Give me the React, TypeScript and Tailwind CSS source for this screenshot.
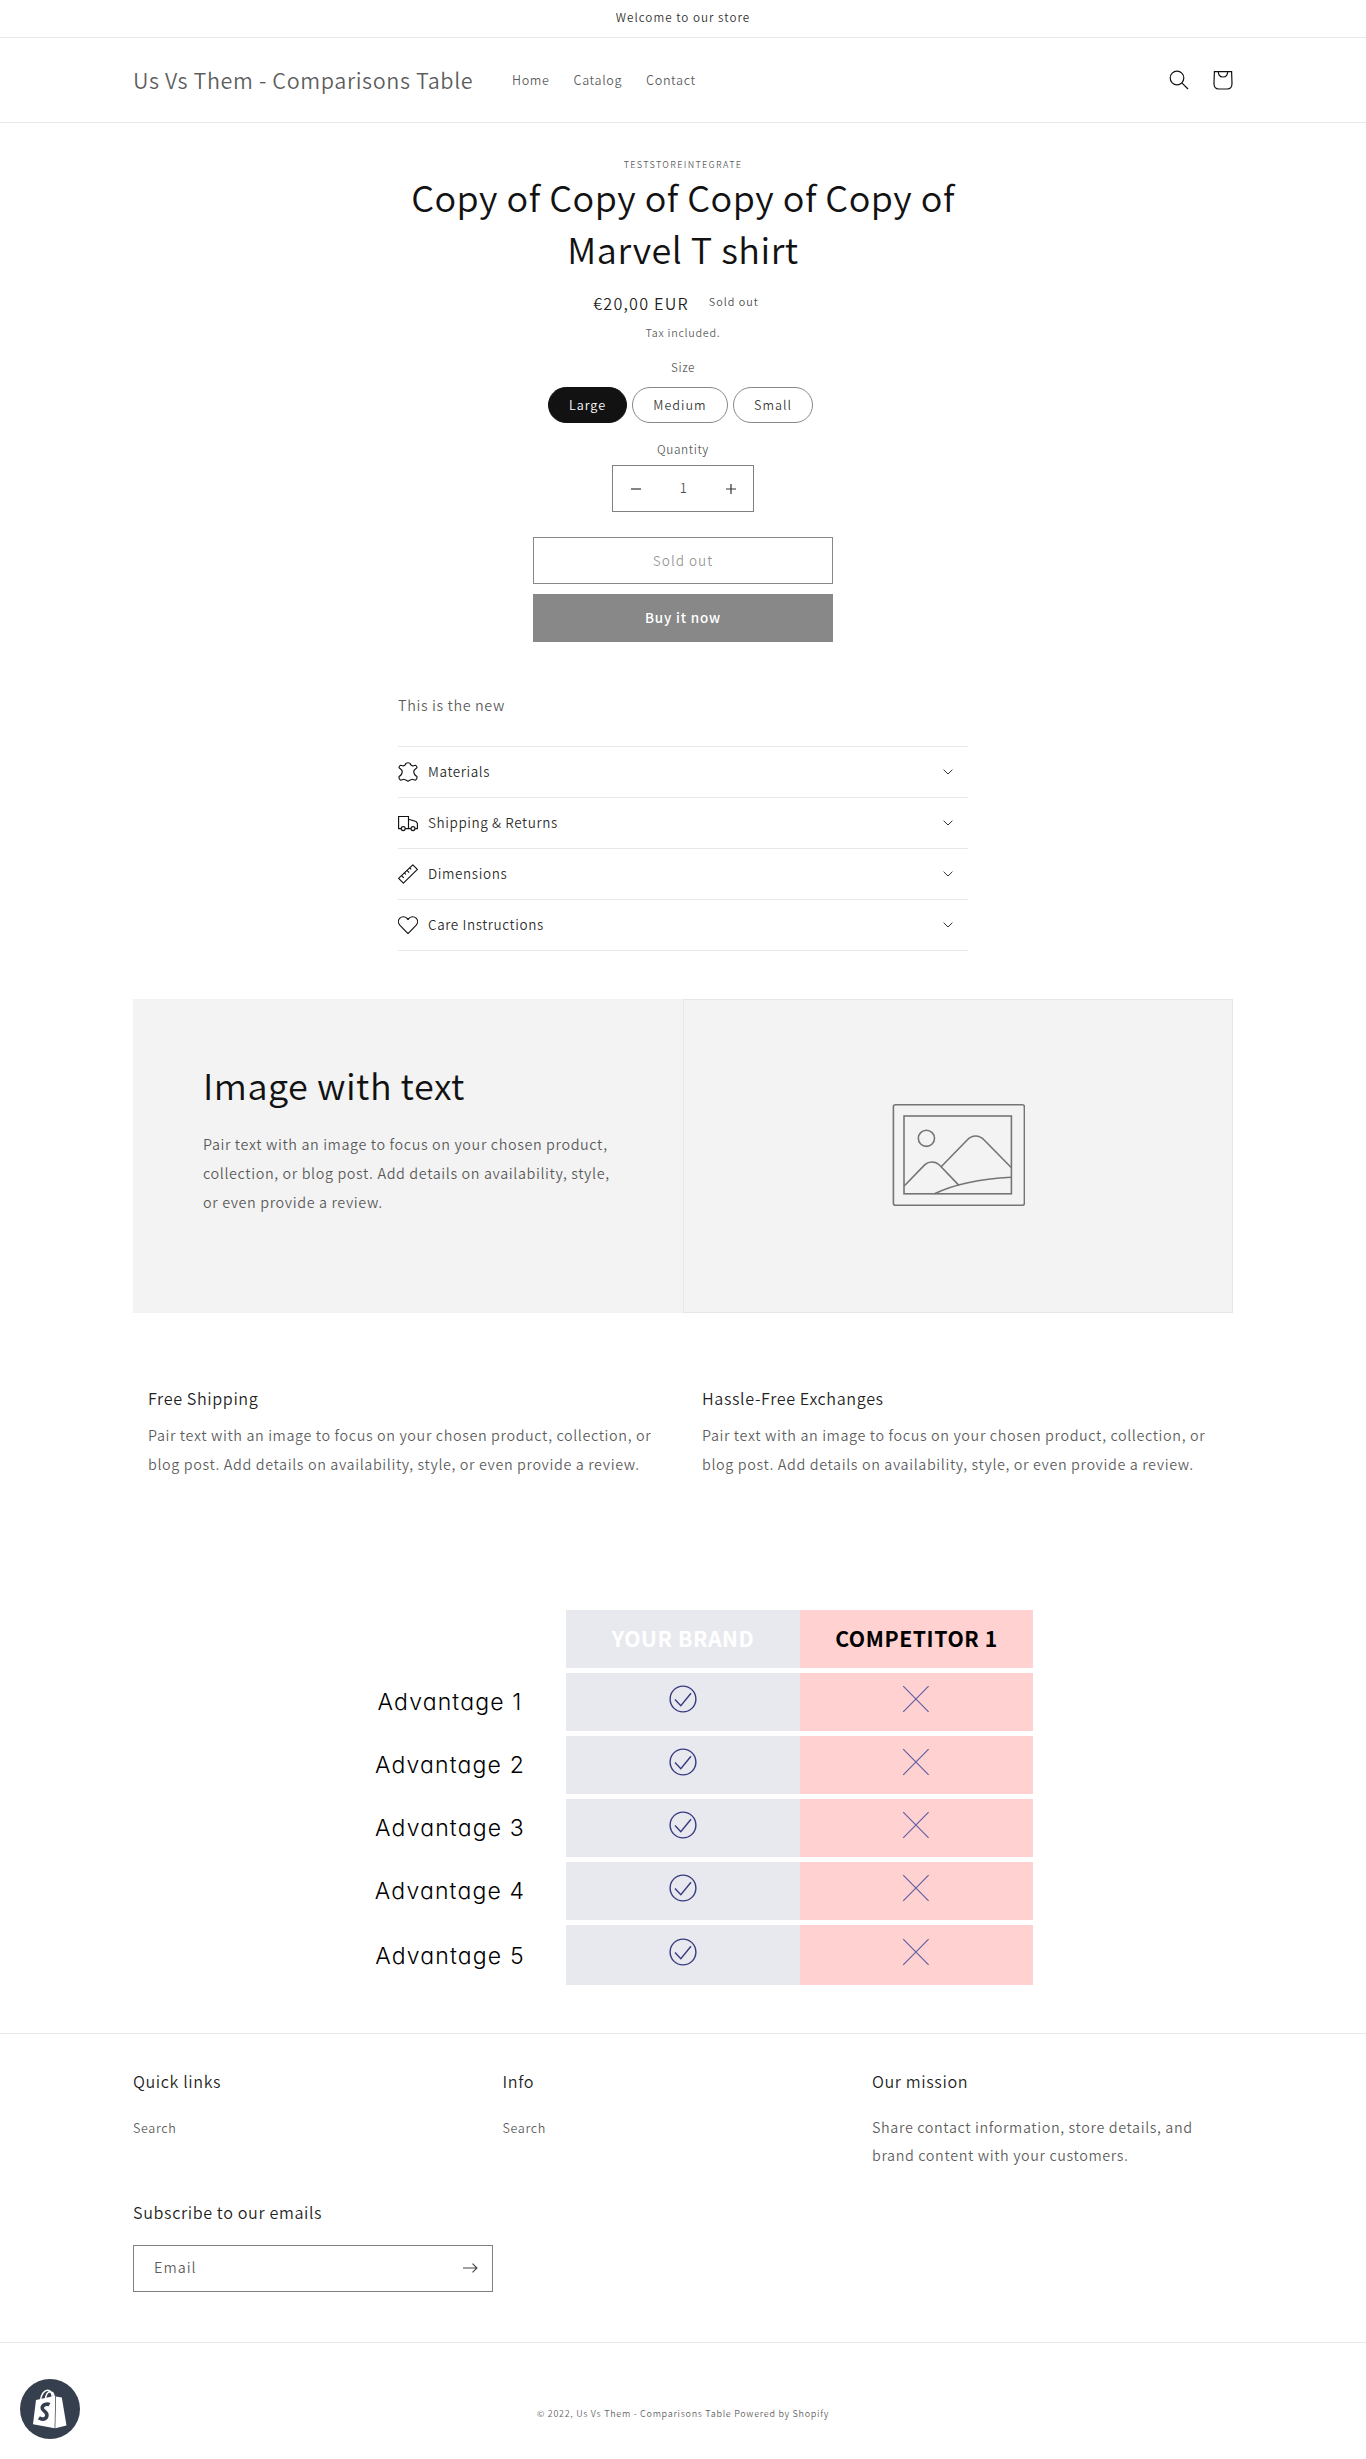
import React from "react";

const TEXT = "Pair text with an image to focus on your chosen product, collection, or blog post. Add details on availability, style, or even provide a review.";

function SearchIcon() {
  return (
    <svg className="h-[22px] w-[22px]" viewBox="0 0 22 22" fill="none" stroke="#121212" strokeWidth="1.2">
      <circle cx="9" cy="9" r="6.8" />
      <path d="M13.8 13.8L20 20" />
    </svg>
  );
}

function CartIcon() {
  return (
    <svg className="h-[22px] w-[22px]" viewBox="0 0 22 22" fill="none" stroke="#121212" strokeWidth="1.2">
      <path d="M2.4 2.6H19.6L20 14.5C20 18 18 20 15.2 20H6.8C4 20 2 18 2 14.5Z" />
      <path d="M6.3 2.6C6.3 6 8.2 8 11 8C13.8 8 15.7 6 15.7 2.6" />
    </svg>
  );
}

const rowIcon = "h-5 w-5 shrink-0";

function LeatherIcon() {
  return (
    <svg className={rowIcon} viewBox="0 0 20 20" fill="none" stroke="#121212" strokeWidth="1.15" strokeLinejoin="round">
      <path d="M7.4 2.6C7.6 1 8.8.7 10 .7S12.4 1 12.6 2.6C13.6 4.2 15.4 4 17.2 3.2C18.4 3.4 19 4.4 19 5.6C18.2 6.8 16.4 7 15.8 9C15.6 11.6 16.4 13 19 14.6C19.2 16 18.6 17.4 17.6 18C16.2 18.4 15.6 17.2 14.2 17.2C12.8 17.2 12.6 18.4 11.4 18.4C10.8 18.4 10.6 19.2 10 19.2S9.2 18.4 8.6 18.4C7.4 18.4 7.2 17.2 5.8 17.2C4.4 17.2 3.8 18.4 2.4 18C1.4 17.4.8 16 1 14.6C3.6 13 4.4 11.6 4.2 9C3.6 7 1.8 6.8 1 5.6C1 4.4 1.6 3.4 2.8 3.2C4.6 4 6.4 4.2 7.4 2.6Z" />
    </svg>
  );
}

function TruckIcon() {
  return (
    <svg className={rowIcon} viewBox="0 0 20 20" fill="none" stroke="#121212" strokeWidth="1.15">
      <path d="M3 15.6H.6V3.5H10.5V15.6H7.4M10.5 6.3L18 8.4L19.4 10.4V15.6H17.2M12.8 15.6H10.5" />
      <circle cx="5.2" cy="15.6" r="2" />
      <circle cx="15" cy="15.6" r="2" />
    </svg>
  );
}

function RulerIcon() {
  return (
    <svg className={rowIcon} viewBox="0 0 20 20" fill="none" stroke="#121212" strokeWidth="1.15" strokeLinejoin="round">
      <path d="M.6 14.4L14.8.8L19.4 5.4L5.4 19.2Z" />
      <path d="M3.6 11.6L5.8 13.8M6.4 8.9L7.9 10.4M9 6.4L11.2 8.6M11.6 3.9L13.1 5.4" />
    </svg>
  );
}

function HeartIcon() {
  return (
    <svg className={rowIcon} viewBox="0 0 20 20" fill="none" stroke="#121212" strokeWidth="1.15" strokeLinejoin="round">
      <path d="M10 18.6L2 10.3C-.1 8-.1 5 1.9 3.1C3.9 1.2 7 1.3 8.8 3.2L10 4.5L11.2 3.2C13 1.3 16.1 1.2 18.1 3.1C20.1 5 20.1 8 18 10.3Z" />
    </svg>
  );
}

function Caret() {
  return (
    <svg className="mt-px h-[6px] w-[10px]" viewBox="0 0 10 6" fill="none" stroke="#333" strokeWidth="1">
      <path d="M.6.7L5 5L9.4.7" />
    </svg>
  );
}

function Placeholder() {
  return (
    <svg className="h-[102px] w-[133px]" viewBox="0 0 133 102" fill="none" stroke="#757575" strokeWidth="1.6">
      <rect x="1.4" y="0.8" width="131" height="100.4" rx="2" />
      <rect x="12" y="12" width="107.4" height="77.8" />
      <circle cx="34.4" cy="34.3" r="8.1" />
      <path d="M12.2 82L32.9 60.6C36.9 57 43.4 57 47.4 61L67.2 81.6M49.4 62.5L74.9 36.3C79.9 30.5 87.4 30.5 92.4 36.3L119.2 63.5M42.4 89.8C60.4 81 85.4 75 119.2 73.2" />
    </svg>
  );
}

function CheckIcon() {
  return (
    <svg className="h-7 w-7" viewBox="0 0 28 28" fill="none" stroke="#373a80" strokeWidth="1.4">
      <circle cx="14" cy="14" r="12.9" />
      <path d="M6 14.6L11.8 20.7L22 8.3" />
    </svg>
  );
}

function CrossIcon() {
  return (
    <svg className="-ml-px h-7 w-7" viewBox="0 0 28 28" fill="none" stroke="#5d5fa3" strokeWidth="1.15">
      <path d="M1.2 1.2L26.6 26.8M26.6 1.2L1.2 26.8" />
    </svg>
  );
}

function ShopifyBadge() {
  return (
    <svg className="absolute top-[2379px] left-5 h-[60px] w-[60px]" viewBox="0 0 60 60">
      <circle cx="30" cy="30" r="30" fill="#363f4d" />
      <path d="M16 21L35.3 16.7L34.6 49.2L13 45.2Z" fill="#fff" />
      <path d="M36 17.4L41.8 18.6L46.5 46.6L35.3 49.2Z" fill="#fff" />
      <path d="M20.5 21.5C21 15.5 24 11.5 27.3 11.3C30.7 11.2 32.3 14.5 32.3 19M25.5 20C26 15.5 28 13 30 12.8C32.5 12.8 34 14.8 34 18.5" fill="none" stroke="#fff" strokeWidth="1.5" />
      <path d="M29.5 25.7C27.5 24.6 22.4 25.3 22.2 28.9C22.2 32.2 27.3 32.4 26.9 36.5C26.5 40.3 22.2 41.2 18.9 38.8" fill="none" stroke="#363f4d" strokeWidth="3.6" />
    </svg>
  );
}

const accordion = [
  { icon: <LeatherIcon />, label: "Materials" },
  { icon: <TruckIcon />, label: "Shipping & Returns" },
  { icon: <RulerIcon />, label: "Dimensions" },
  { icon: <HeartIcon />, label: "Care Instructions" },
];

const pill = "flex h-9 items-center justify-center rounded-full border pl-px text-[12.6px] tracking-[1px]";

export default function App() {
  return (
    <div className="relative h-[2459px] w-[1366px] overflow-hidden bg-white font-['Noto_Sans_CJK_SC','Noto_Sans_CJK_JP',sans-serif] text-[14.4px] leading-[28.8px] font-[350] tracking-[0.6px] text-[#121212]/70">
      <div className="flex h-[38px] items-center justify-center border-b border-[#e8e8e8] pb-[2px] text-[11.7px] tracking-[1px] text-[#121212]/90">
        Welcome to our store
      </div>

      <header className="h-[85px] border-b border-[#e8e8e8]">
        <div className="mx-auto flex h-full w-[1100px] items-center">
          <div className="w-[379px] text-[21.6px] leading-none">Us Vs Them - Comparisons Table</div>
          <nav className="flex flex-1 gap-6 text-[12.6px]">
            <a>Home</a>
            <a>Catalog</a>
            <a>Contact</a>
          </nav>
          <div className="-mr-px flex gap-[22px]">
            <SearchIcon />
            <CartIcon />
          </div>
        </div>
      </header>

      <section className="mx-auto flex w-[570px] flex-col items-center pt-[35px]">
        <div className="text-[9px] leading-[14px] tracking-[1.3px]">TESTSTOREINTEGRATE</div>
        <h1 className="-mt-0.5 text-center text-[36px] leading-[52px] tracking-[0.5px] text-[#121212]">
          Copy of Copy of Copy of Copy of
          <br />
          Marvel T shirt
        </h1>
        <div className="mt-4 flex gap-5 pr-[14px] text-[16.2px] leading-[27px] tracking-[1.2px] text-[#121212]/95">
          <span>€20,00 EUR</span>
          <span className="text-[10.8px] leading-[23px] tracking-[1px] text-[#121212]/80">Sold out</span>
        </div>
        <div className="mt-1 text-[10.8px] leading-[22px] tracking-[0.7px]">Tax included.</div>
        <div className="mt-[13px] text-[11.7px] leading-[22px]">Size</div>
        <div className="mt-[9px] flex w-[271px] gap-[5px]">
          <div className={pill + " w-[79px] border-[#121212] bg-[#121212] text-white"}>Large</div>
          <div className={pill + " w-24 border-[#888] text-[#121212]/85"}>Medium</div>
          <div className={pill + " w-20 border-[#888] text-[#121212]/85"}>Small</div>
        </div>
        <div className="mt-[15px] text-[11.7px] leading-[22px]">Quantity</div>
        <div className="mt-[5px] flex h-[47px] w-[142px] items-center justify-between border border-[#808080] pr-[17px] pl-[18px]">
          <svg className="h-[10px] w-[10px]" viewBox="0 0 10 10" stroke="#333" strokeWidth="1.2"><path d="M0 5H10" /></svg>
          <span className="text-[13px] text-[#121212]/75">1</span>
          <svg className="h-[10px] w-[10px]" viewBox="0 0 10 10" stroke="#333" strokeWidth="1.2"><path d="M0 5H10M5 0V10" /></svg>
        </div>
        <div className="mt-[25px] flex h-[47px] w-[300px] items-center justify-center border border-[#888] text-[13.5px] tracking-[1px] text-[#121212]/45">Sold out</div>
        <div className="mt-[10px] flex h-12 w-[300px] items-center justify-center bg-[#888] pb-px text-[13.5px] font-medium tracking-[0.8px] text-white">Buy it now</div>
        <div className="mt-[49px] w-full">This is the new</div>
        <div className="mt-[26px] w-full">
          {accordion.map((row) => (
            <div key={row.label} className="flex h-[51px] items-center border-t border-[#e8e8e8] pr-[15px] text-[#121212]/90">
              {row.icon}
              <span className="ml-[10px] flex-1 text-[13.5px]">{row.label}</span>
              <Caret />
            </div>
          ))}
          <div className="h-px bg-[#e8e8e8]" />
        </div>
      </section>

      <section className="mx-auto mt-12 flex h-[314px] w-[1100px] bg-[#f3f3f3]">
        <div className="w-[550px] pt-[59px] pl-[70px]">
          <h2 className="text-[36px] leading-[52px] tracking-[0.5px] text-[#121212]">Image with text</h2>
          <p className="mt-[19px] w-[410px] leading-[29px]">{TEXT}</p>
        </div>
        <div className="flex w-[550px] items-center justify-center border border-[#e6e6e6] pb-[2px] pl-px">
          <Placeholder />
        </div>
      </section>

      <section className="mx-auto mt-[72px] flex h-[93px] w-[1070px] gap-[44px]">
        {["Free Shipping", "Hassle-Free Exchanges"].map((title) => (
          <div key={title} className="w-[510px]">
            <h3 className="text-[16.2px] leading-[26px] text-[#121212]/95">{title}</h3>
            <p className="mt-[9px] leading-[29px]">{TEXT}</p>
          </div>
        ))}
      </section>

      <section className="mx-auto mt-[132px] grid w-[700px] grid-cols-[233px_234px_233px] gap-y-[5px] text-black">
        <div />
        <div className="flex h-[58px] items-center justify-center bg-[#e8e9ee] text-[21.2px] font-bold text-white">YOUR BRAND</div>
        <div className="flex h-[58px] items-center justify-center bg-[#ffd1d1] text-[21.2px] font-bold">COMPETITOR 1</div>
        {[1, 2, 3, 4, 5].map((n) => (
          <React.Fragment key={n}>
            <div className={(n === 5 ? "pt-[3px]" : "pt-[2px]") + " flex items-center justify-center pl-px font-['Inter',sans-serif] text-[23px] font-[350] tracking-[1.15px] [font-feature-settings:'cv11']"}>Advantage {n}</div>
            <div className={(n === 5 ? "h-[60px] pt-[13px]" : "h-[58px] pt-3") + " flex justify-center bg-[#e8e9ee]"}><CheckIcon /></div>
            <div className={(n === 5 ? "h-[60px] pt-[13px]" : "h-[58px] pt-3") + " flex justify-center bg-[#ffd1d1]"}><CrossIcon /></div>
          </React.Fragment>
        ))}
      </section>

      <footer className="mt-12 border-t border-[#e8e8e8]">
        <div className="mx-auto w-[1100px] pt-[34px]">
          <div className="flex h-[101px]">
            {["Quick links", "Info"].map((title) => (
              <div key={title} className="w-[369.5px]">
                <h3 className="text-[16.2px] leading-[26px] text-[#121212]/95">{title}</h3>
                <div className="mt-5 text-[12.6px]">Search</div>
              </div>
            ))}
            <div className="w-[340px]">
              <h3 className="text-[16.2px] leading-[26px] text-[#121212]/95">Our mission</h3>
              <p className="mt-[19px] leading-[28px]">Share contact information, store details, and brand content with your customers.</p>
            </div>
          </div>
          <h3 className="mt-[30px] text-[16.2px] leading-[26px] text-[#121212]/95">Subscribe to our emails</h3>
          <div className="mt-5 flex h-[47px] w-[360px] items-center justify-between border border-[#808080] pr-[14px] pl-5">
            <span className="pb-px tracking-[1px]">Email</span>
            <svg className="h-[10px] w-[15px]" viewBox="0 0 15 10" fill="none" stroke="#444" strokeWidth="1.1"><path d="M0 5H14M9.5.6L14 5L9.5 9.4" /></svg>
          </div>
        </div>
        <div className="mt-[50px] border-t border-[#e8e8e8] pt-[60px] text-center text-[9px] leading-[22px] tracking-[0.7px]">© 2022, Us Vs Them - Comparisons Table Powered by Shopify</div>
      </footer>
      <ShopifyBadge />
    </div>
  );
}
